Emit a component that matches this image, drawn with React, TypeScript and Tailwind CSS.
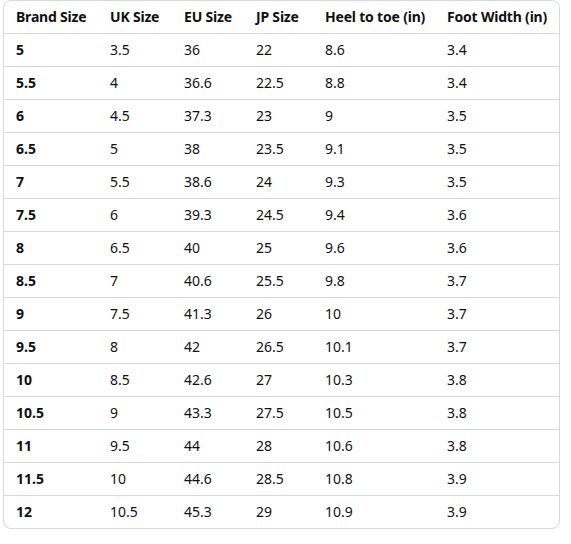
const headers = ['Brand Size', 'UK Size', 'EU Size', 'JP Size', 'Heel to toe (in)', 'Foot Width (in)'];

const rows = [
  ['5', '3.5', '36', '22', '8.6', '3.4'],
  ['5.5', '4', '36.6', '22.5', '8.8', '3.4'],
  ['6', '4.5', '37.3', '23', '9', '3.5'],
  ['6.5', '5', '38', '23.5', '9.1', '3.5'],
  ['7', '5.5', '38.6', '24', '9.3', '3.5'],
  ['7.5', '6', '39.3', '24.5', '9.4', '3.6'],
  ['8', '6.5', '40', '25', '9.6', '3.6'],
  ['8.5', '7', '40.6', '25.5', '9.8', '3.7'],
  ['9', '7.5', '41.3', '26', '10', '3.7'],
  ['9.5', '8', '42', '26.5', '10.1', '3.7'],
  ['10', '8.5', '42.6', '27', '10.3', '3.8'],
  ['10.5', '9', '43.3', '27.5', '10.5', '3.8'],
  ['11', '9.5', '44', '28', '10.6', '3.8'],
  ['11.5', '10', '44.6', '28.5', '10.8', '3.9'],
  ['12', '10.5', '45.3', '29', '10.9', '3.9'],
];

const widths = ['w-[94px]', 'w-[74px]', 'w-[72px]', 'w-[69px]', 'w-[122px]', 'w-[125px]'];

export default function App() {
  return (
    <div className="bg-white min-h-[544px] pl-[3px] font-['Noto_Sans',sans-serif] text-[14px] text-[#0f1111]">
      <div className="w-[557px] border border-[#d5d9d9] rounded-[8px] overflow-hidden">
        <table className="w-full table-fixed border-collapse">
          <colgroup>
            {widths.map((w, i) => (
              <col key={i} className={w} />
            ))}
          </colgroup>
          <thead>
            <tr className="h-[32px]">
              {headers.map((h) => (
                <th key={h} className="text-left font-bold pl-[12px] p-0 whitespace-nowrap tracking-[-0.2px]">
                  {h}
                </th>
              ))}
            </tr>
          </thead>
          <tbody>
            {rows.map((r) => (
              <tr key={r[0]} className="h-[33px] border-t border-[#d5d9d9]">
                {r.map((c, i) => (
                  <td key={i} className={`pl-[12px] p-0 ${i === 0 ? 'font-bold' : ''}`}>
                    {c}
                  </td>
                ))}
              </tr>
            ))}
          </tbody>
        </table>
      </div>
    </div>
  );
}
